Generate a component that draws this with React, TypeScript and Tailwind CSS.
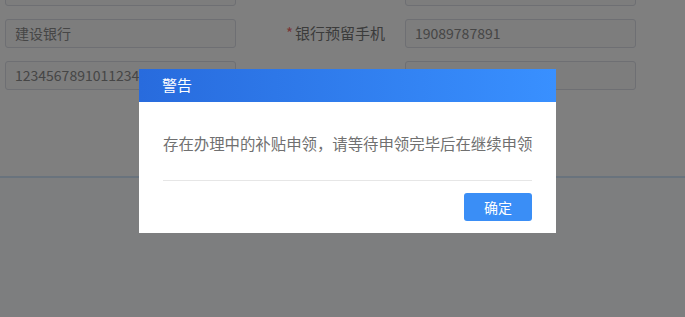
const font = { fontFamily: '"Noto Sans CJK SC", "Noto Sans", sans-serif' };

function Field({ value, className = "" }: { value?: string; className?: string }) {
  return (
    <div
      className={`h-[29px] w-[231px] shrink-0 overflow-hidden whitespace-nowrap rounded-[3px] border border-[#dcdfe6] bg-[#fafafa] px-[9px] text-[14px] leading-[27px] text-[#8c8c8c] ${className}`}
    >
      {value}
    </div>
  );
}

export default function App() {
  return (
    <div className="relative h-[317px] w-[685px] overflow-hidden bg-white" style={font}>
      {/* form underneath */}
      <div className="flex flex-col gap-[13px] pl-[5px] pt-0 -mt-[23px]">
        <div className="flex items-center">
          <Field value="" />
          <div className="w-[169px]" />
          <Field value="" />
        </div>
        <div className="flex items-center">
          <Field value="建设银行" />
          <div className="w-[169px] pr-[20px] text-right text-[15px] text-[#777]">
            <span className="mr-[2px] text-[#f56c6c]">*</span>银行预留手机
          </div>
          <Field value="19089787891" />
        </div>
        <div className="flex items-center">
          <Field value="1234567891011234567" />
          <div className="w-[169px]" />
          <Field value="" />
        </div>
      </div>
      <div className="mt-[86px] h-full border-t-2 border-[#d3e6fa] bg-[#fbfcfe]" />

      {/* mask + dialog */}
      <div className="absolute inset-0 bg-black/50 pl-[139px] pt-[69px]">
        <div className="w-[417px] bg-white">
          <div className="flex h-[33px] items-center bg-gradient-to-r from-[#286bdd] to-[#3990ff] pl-[23px] text-[15px] text-white">
            警告
          </div>
          <div className="px-6 pb-3">
            <p className="pt-[29px] pb-[25px] text-[15.4px] leading-[24px] text-[#707070] whitespace-nowrap">
              存在办理中的补贴申领，请等待申领完毕后在继续申领
            </p>
            <div className="border-t border-[#e6e6e6]" />
            <div className="flex justify-end pt-[12px]">
              <button className="h-[28px] w-[68px] rounded-[3px] bg-[#3a8ef6] text-[14px] text-white">
                确定
              </button>
            </div>
          </div>
        </div>
      </div>
    </div>
  );
}
